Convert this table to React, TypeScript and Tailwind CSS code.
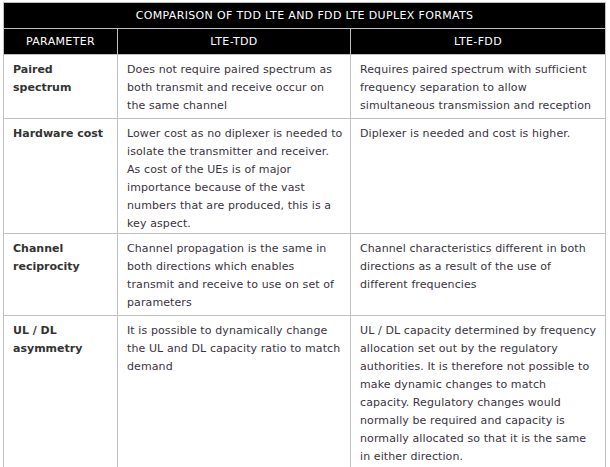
const ROWS = [
  {
    param: ["Paired", "spectrum"],
    tdd: "Does not require paired spectrum as both transmit and receive occur on the same channel",
    fdd: "Requires paired spectrum with sufficient frequency separation to allow simultaneous transmission and reception",
    height: "h-[64px]",
  },
  {
    param: ["Hardware cost"],
    tdd: "Lower cost as no diplexer is needed to isolate the transmitter and receiver. As cost of the UEs is of major importance because of the vast numbers that are produced, this is a key aspect.",
    fdd: "Diplexer is needed and cost is higher.",
    height: "h-[113px]",
  },
  {
    param: ["Channel", "reciprocity"],
    tdd: "Channel propagation is the same in both directions which enables transmit and receive to use on set of parameters",
    fdd: "Channel characteristics different in both directions as a result of the use of different frequencies",
    height: "h-[82px]",
  },
  {
    param: ["UL / DL", "asymmetry"],
    tdd: "It is possible to dynamically change the UL and DL capacity ratio to match demand",
    fdd: "UL / DL capacity determined by frequency allocation set out by the regulatory authorities. It is therefore not possible to make dynamic changes to match capacity. Regulatory changes would normally be required and capacity is normally allocated so that it is the same in either direction.",
    height: "h-[170px]",
  },
];

export default function App() {
  return (
    <div className="min-h-screen bg-white pl-[3px] pt-[2px] font-['DejaVu_Sans',Verdana,sans-serif] text-[11px] leading-[18px] text-[#3a3340]">
      <table className="w-[602px] table-fixed border-collapse border border-[#c0c0c0]">
        <colgroup>
          <col className="w-[114px]" />
          <col className="w-[233px]" />
          <col className="w-[255px]" />
        </colgroup>
        <thead>
          <tr className="h-[26px] bg-black text-white tracking-[0.35px]">
            <th colSpan={3} className="border border-[#c0c0c0] px-2 text-center font-normal">
              COMPARISON OF TDD LTE AND FDD LTE DUPLEX FORMATS
            </th>
          </tr>
          <tr className="h-[26px] bg-black text-white tracking-[0.35px]">
            <th className="border border-[#c0c0c0] px-2 text-center font-normal">PARAMETER</th>
            <th className="border border-[#c0c0c0] px-2 text-center font-normal">LTE-TDD</th>
            <th className="border border-[#c0c0c0] px-2 text-center font-normal">LTE-FDD</th>
          </tr>
        </thead>
        <tbody>
          {ROWS.map((row) => (
            <tr key={row.param.join(" ")} className={row.height}>
              <td className="border border-[#c0c0c0] pl-[9px] pr-2 pt-[6px] align-top font-bold text-[#333]">
                {row.param.map((p) => (
                  <div key={p}>{p}</div>
                ))}
              </td>
              <td className="border border-[#c0c0c0] pl-[9px] pr-[5px] pt-[6px] align-top tracking-[0.1px]">{row.tdd}</td>
              <td className="border border-[#c0c0c0] pl-[9px] pr-2 pt-[6px] align-top tracking-[0.1px]">{row.fdd}</td>
            </tr>
          ))}
        </tbody>
      </table>
    </div>
  );
}
